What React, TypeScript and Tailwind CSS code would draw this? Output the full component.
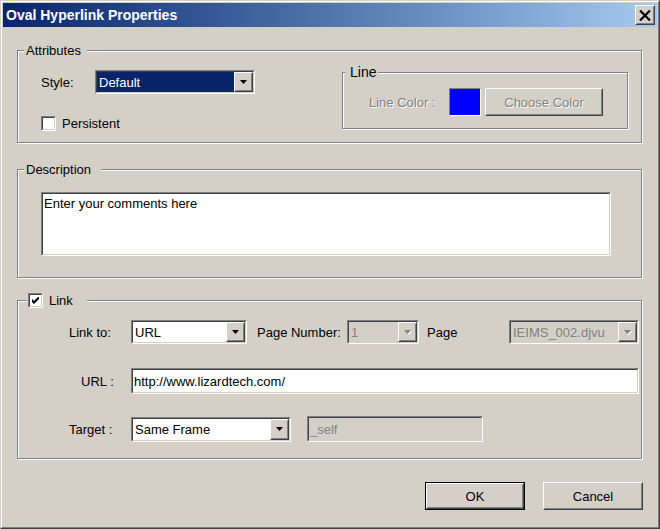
import React from "react";

const sunkenOuter =
  "border border-t-[#808080] border-l-[#808080] border-r-white border-b-white";
const sunkenInner =
  "border border-t-[#404040] border-l-[#404040] border-r-[#d4d0c8] border-b-[#d4d0c8]";
const raisedOuter =
  "border border-t-white border-l-white border-r-[#404040] border-b-[#404040]";
const raisedInner =
  "border border-t-[#d4d0c8] border-l-[#d4d0c8] border-r-[#808080] border-b-[#808080]";
const etched =
  "border border-[#808080] shadow-[inset_1px_1px_0_#fff,1px_1px_0_#fff]";
const embossed = "text-[#808080] [text-shadow:1px_1px_0_#fff]";

function Arrow({ disabled }: { disabled?: boolean }) {
  return (
    <div className={`${raisedOuter} w-[19px] h-full bg-[#d4d0c8]`}>
      <div className={`${raisedInner} h-full flex items-center justify-center`}>
        <svg width="8" height="5" viewBox="0 0 8 5">
          {disabled && <path d="M1 1h7l-3.5 4z" fill="#fff" />}
          <path d="M0 0h7l-3.5 4z" fill={disabled ? "#808080" : "#000"} />
        </svg>
      </div>
    </div>
  );
}

function Combo({
  value,
  className,
  selected,
  disabled,
}: {
  value: string;
  className: string;
  selected?: boolean;
  disabled?: boolean;
}) {
  return (
    <div className={`${sunkenOuter} ${className}`}>
      <div
        className={`${sunkenInner} h-full flex ${disabled ? "bg-[#d4d0c8]" : "bg-white"}`}
      >
        <div
          className={`flex-1 flex items-center pl-[2px] ${
            selected ? "bg-[#0a246a] text-white" : disabled ? "text-[#808080]" : "text-black"
          }`}
        >
          {value}
        </div>
        <Arrow disabled={disabled} />
      </div>
    </div>
  );
}

function Field({
  value,
  className,
  disabled,
}: {
  value: string;
  className: string;
  disabled?: boolean;
}) {
  return (
    <div className={`${sunkenOuter} ${className}`}>
      <div
        className={`${sunkenInner} h-full flex items-center pl-[1px] ${
          disabled ? "bg-[#d4d0c8] text-[#808080]" : "bg-white text-black"
        }`}
      >
        {value}
      </div>
    </div>
  );
}

function Checkbox({ checked }: { checked?: boolean }) {
  return (
    <div className={`${sunkenOuter} w-[15px] h-[15px] shrink-0`}>
      <div className={`${sunkenInner} h-full bg-white flex items-center justify-center`}>
        {checked && (
          <svg width="7" height="7" viewBox="0 0 7 7">
            <path d="M0 2v3l2 2 5-5V-1L2 4z" fill="#000" />
          </svg>
        )}
      </div>
    </div>
  );
}

function PushButton({
  label,
  className,
  isDefault,
  disabled,
}: {
  label: string;
  className: string;
  isDefault?: boolean;
  disabled?: boolean;
}) {
  return (
    <div className={`${className} ${isDefault ? "border border-black" : ""}`}>
      <div className={`${raisedOuter} h-full`}>
        <div
          className={`${raisedInner} h-full flex items-center justify-center ${
            disabled ? embossed : "text-black"
          }`}
        >
          {label}
        </div>
      </div>
    </div>
  );
}

function GroupLabel({ children, className }: { children: React.ReactNode; className: string }) {
  return (
    <div
      className={`absolute top-[-8px] bg-[#d4d0c8] flex items-center h-[15px] ${className}`}
    >
      {children}
    </div>
  );
}

export default function App() {
  return (
    <div className="w-[660px] h-[529px] bg-[#d4d0c8] font-['Liberation_Sans',Arial,sans-serif] text-[13px] leading-[15px] text-black border border-t-[#d4d0c8] border-l-[#d4d0c8] border-r-[#404040] border-b-[#404040]">
      <div className="h-full p-px flex flex-col border border-t-white border-l-white border-r-[#808080] border-b-[#808080]">
        {/* title bar */}
        <div className="h-[24px] shrink-0 flex items-center justify-between pl-[3px] pr-[2px] bg-linear-to-r from-[#0a246a] to-[#a6caf0]">
          <span className="text-white font-bold text-[14px]">Oval Hyperlink Properties</span>
          <div className={`${raisedOuter} w-[20px] h-[20px] bg-[#d4d0c8]`}>
            <div className={`${raisedInner} h-full flex items-center justify-center`}>
              <svg width="12" height="11" viewBox="0 0 12 11">
                <path d="M1 0.5l10 10M11 0.5l-10 10" stroke="#000" strokeWidth="2.2" />
              </svg>
            </div>
          </div>
        </div>

        <div className="flex flex-col pl-[14px]">
          {/* Attributes */}
          <div className={`${etched} relative mt-[23px] w-[625px] h-[93px]`}>
            <GroupLabel className="left-[6px] pl-[2px] pr-[6px]">Attributes</GroupLabel>
            <div className="flex pt-[19px]">
              <div className="pl-[23px] flex flex-col">
                <div className="flex items-center h-[24px]">
                  <span className="w-[54px]">Style:</span>
                  <Combo value="Default" className="w-[160px] h-[24px]" selected />
                </div>
                <div className="flex items-center gap-[6px] mt-[22px]">
                  <Checkbox />
                  <span>Persistent</span>
                </div>
              </div>
              <div className={`${etched} relative ml-auto mr-[13px] mt-[2px] w-[286px] h-[57px]`}>
                <GroupLabel className="left-[2px] pl-[5px] pr-[2px] text-[14px]">Line</GroupLabel>
                <div className="flex items-center pt-[15px] pl-[26px]">
                  <span className={`w-[80px] ${embossed}`}>Line Color :</span>
                  <div className="w-[32px] h-[28px] bg-[#0000ff] border border-t-[#808080] border-l-[#808080] border-r-white border-b-white" />
                  <PushButton label="Choose Color" className="ml-[4px] w-[118px] h-[28px]" disabled />
                </div>
              </div>
            </div>
          </div>

          {/* Description */}
          <div className={`${etched} relative mt-[26px] w-[625px] h-[109px]`}>
            <GroupLabel className="left-[6px] pl-[2px] pr-[10px]">Description</GroupLabel>
            <div className="pt-[22px] pl-[23px]">
              <div className={`${sunkenOuter} w-[570px] h-[64px]`}>
                <div className={`${sunkenInner} h-full bg-white pl-[1px] pt-[2px]`}>
                  Enter your comments here
                </div>
              </div>
            </div>
          </div>

          {/* Link */}
          <div className={`${etched} relative mt-[22px] w-[625px] h-[159px]`}>
            <GroupLabel className="left-[9px] pl-[1px] pr-[14px] gap-[6px]">
              <Checkbox checked />
              <span>Link</span>
            </GroupLabel>
            <div className="flex flex-col pt-[19px] pl-[51px]">
              <div className="flex items-center">
                <span className="w-[62px]">Link to:</span>
                <Combo value="URL" className="w-[116px] h-[24px]" />
                <span className="ml-[10px] w-[90px]">Page Number:</span>
                <Combo value="1" className="w-[72px] h-[24px]" disabled />
                <span className="ml-[8px] w-[82px]">Page</span>
                <Combo value="IEIMS_002.djvu" className="w-[130px] h-[24px]" disabled />
              </div>
              <div className="flex items-center mt-[24px]">
                <span className="w-[62px] pl-[12px]">URL :</span>
                <Field value="http://www.lizardtech.com/" className="w-[508px] h-[26px]" />
              </div>
              <div className="flex items-center mt-[22px]">
                <span className="w-[62px]">Target :</span>
                <Combo value="Same Frame" className="w-[160px] h-[25px]" />
                <Field value="_self" className="ml-[16px] w-[176px] h-[26px]" disabled />
              </div>
            </div>
          </div>

          {/* buttons */}
          <div className="flex justify-end gap-[18px] mt-[23px] pr-[14px]">
            <PushButton label="OK" className="w-[100px] h-[28px]" isDefault />
            <PushButton label="Cancel" className="w-[100px] h-[28px]" />
          </div>
        </div>
      </div>
    </div>
  );
}
